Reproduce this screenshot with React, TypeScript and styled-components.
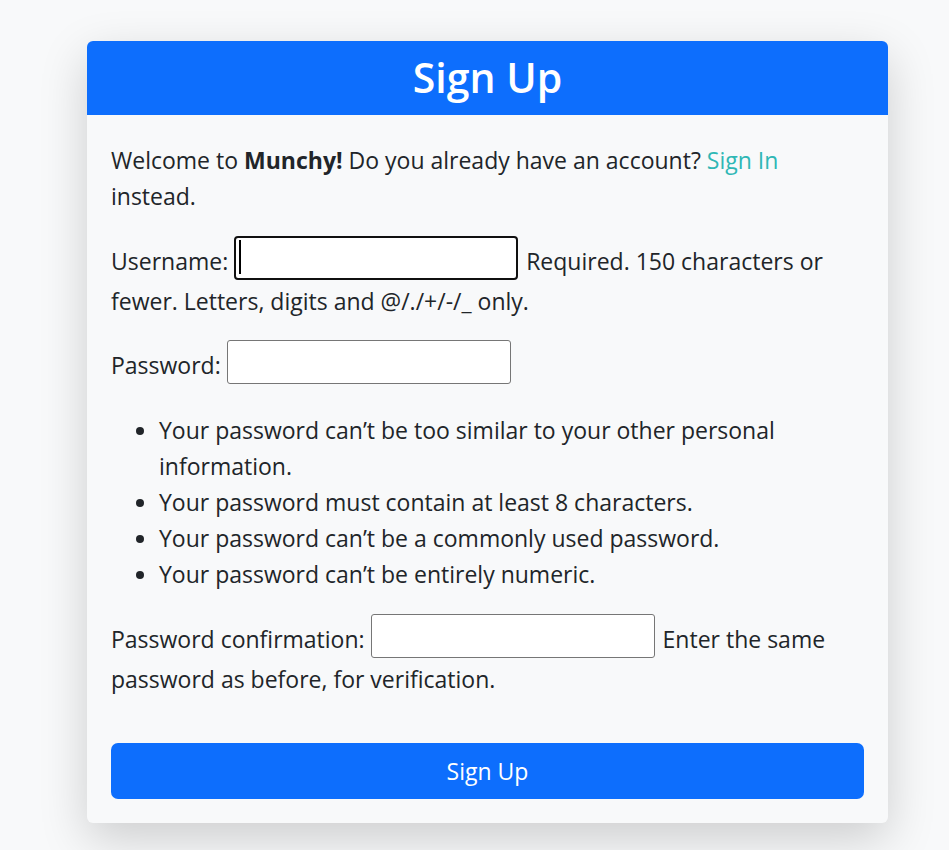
import React from "react";
import styled, { createGlobalStyle } from "styled-components";

const Global = createGlobalStyle`
  *, *::before, *::after { box-sizing: border-box; }
  html, body { margin: 0; padding: 0; background: #f8f9fa; }
  body {
    font-family: "Open Sans", "Noto Sans", sans-serif;
    color: #212529;
    font-size: 23px;
    line-height: 36px;
  }
`;

const Page = styled.div`
  min-height: 850px;
  padding: 41px 0 0 87px;
`;

const Card = styled.section`
  width: 801px;
  background: #f8f9fa;
  border-radius: 6px;
  box-shadow: 0 16px 48px rgba(0, 0, 0, 0.175);
  overflow: hidden;
`;

const Header = styled.header`
  height: 74px;
  background: #0d6efd;
  display: flex;
  align-items: center;
  justify-content: center;
`;

const Title = styled.h1`
  margin: 0;
  color: #fff;
  font-size: 41px;
  font-weight: 600;
  line-height: 1.2;
`;

const Body = styled.form`
  padding: 27px 24px 24px;
`;

const Para = styled.p<{ $gap?: number }>`
  margin: 0 0 ${(p) => p.$gap ?? 28}px;
`;

const SignInLink = styled.a`
  color: #2fb7b5;
  text-decoration: none;
`;

const Label = styled.label``;

const InputBox = styled.span`
  position: relative;
  display: inline-block;
  vertical-align: middle;
  margin: -9px 2px 3px 0;
`;

const TextInput = styled.input<{ $focused?: boolean }>`
  display: block;
  width: 284px;
  height: 44px;
  margin: 0;
  padding: 1px 2px;
  font: inherit;
  background: #fff;
  border: ${(p) => (p.$focused ? "2px solid #101010" : "1px solid #767676")};
  border-radius: ${(p) => (p.$focused ? "4px" : "3px")};
  outline: none;
`;

const Caret = styled.span`
  position: absolute;
  left: 5px;
  top: 4px;
  width: 2px;
  height: 34px;
  background: #000;
`;

const HelpList = styled.ul`
  margin: 0 0 29px;
  padding-left: 48px;
`;

const SubmitButton = styled.button`
  display: block;
  width: 100%;
  height: 56px;
  margin-top: 46px;
  border: none;
  border-radius: 7px;
  background: #0d6efd;
  color: #fff;
  font-family: inherit;
  font-size: 23px;
  cursor: pointer;
`;

export default function App() {
  return (
    <>
      <Global />
      <Page>
        <Card>
          <Header>
            <Title>Sign Up</Title>
          </Header>
          <Body onSubmit={(e) => e.preventDefault()}>
            <Para $gap={29}>
              Welcome to <strong>Munchy!</strong> Do you already have an account?{" "}
              <SignInLink href="#">Sign In</SignInLink> instead.
            </Para>
            <Para>
              <Label htmlFor="id_username">Username:</Label>{" "}
              <InputBox>
                <TextInput id="id_username" type="text" $focused />
                <Caret />
              </InputBox>{" "}
              Required. 150 characters or fewer. Letters, digits and @/./+/-/_ only.
            </Para>
            <Para $gap={25}>
              <Label htmlFor="id_password1">Password:</Label>{" "}
              <InputBox>
                <TextInput id="id_password1" type="password" />
              </InputBox>
            </Para>
            <HelpList>
              <li>Your password can’t be too similar to your other personal information.</li>
              <li>Your password must contain at least 8 characters.</li>
              <li>Your password can’t be a commonly used password.</li>
              <li>Your password can’t be entirely numeric.</li>
            </HelpList>
            <Para>
              <Label htmlFor="id_password2">Password confirmation:</Label>{" "}
              <InputBox>
                <TextInput id="id_password2" type="password" />
              </InputBox>{" "}
              Enter the same password as before, for verification.
            </Para>
            <SubmitButton type="submit">Sign Up</SubmitButton>
          </Body>
        </Card>
      </Page>
    </>
  );
}
